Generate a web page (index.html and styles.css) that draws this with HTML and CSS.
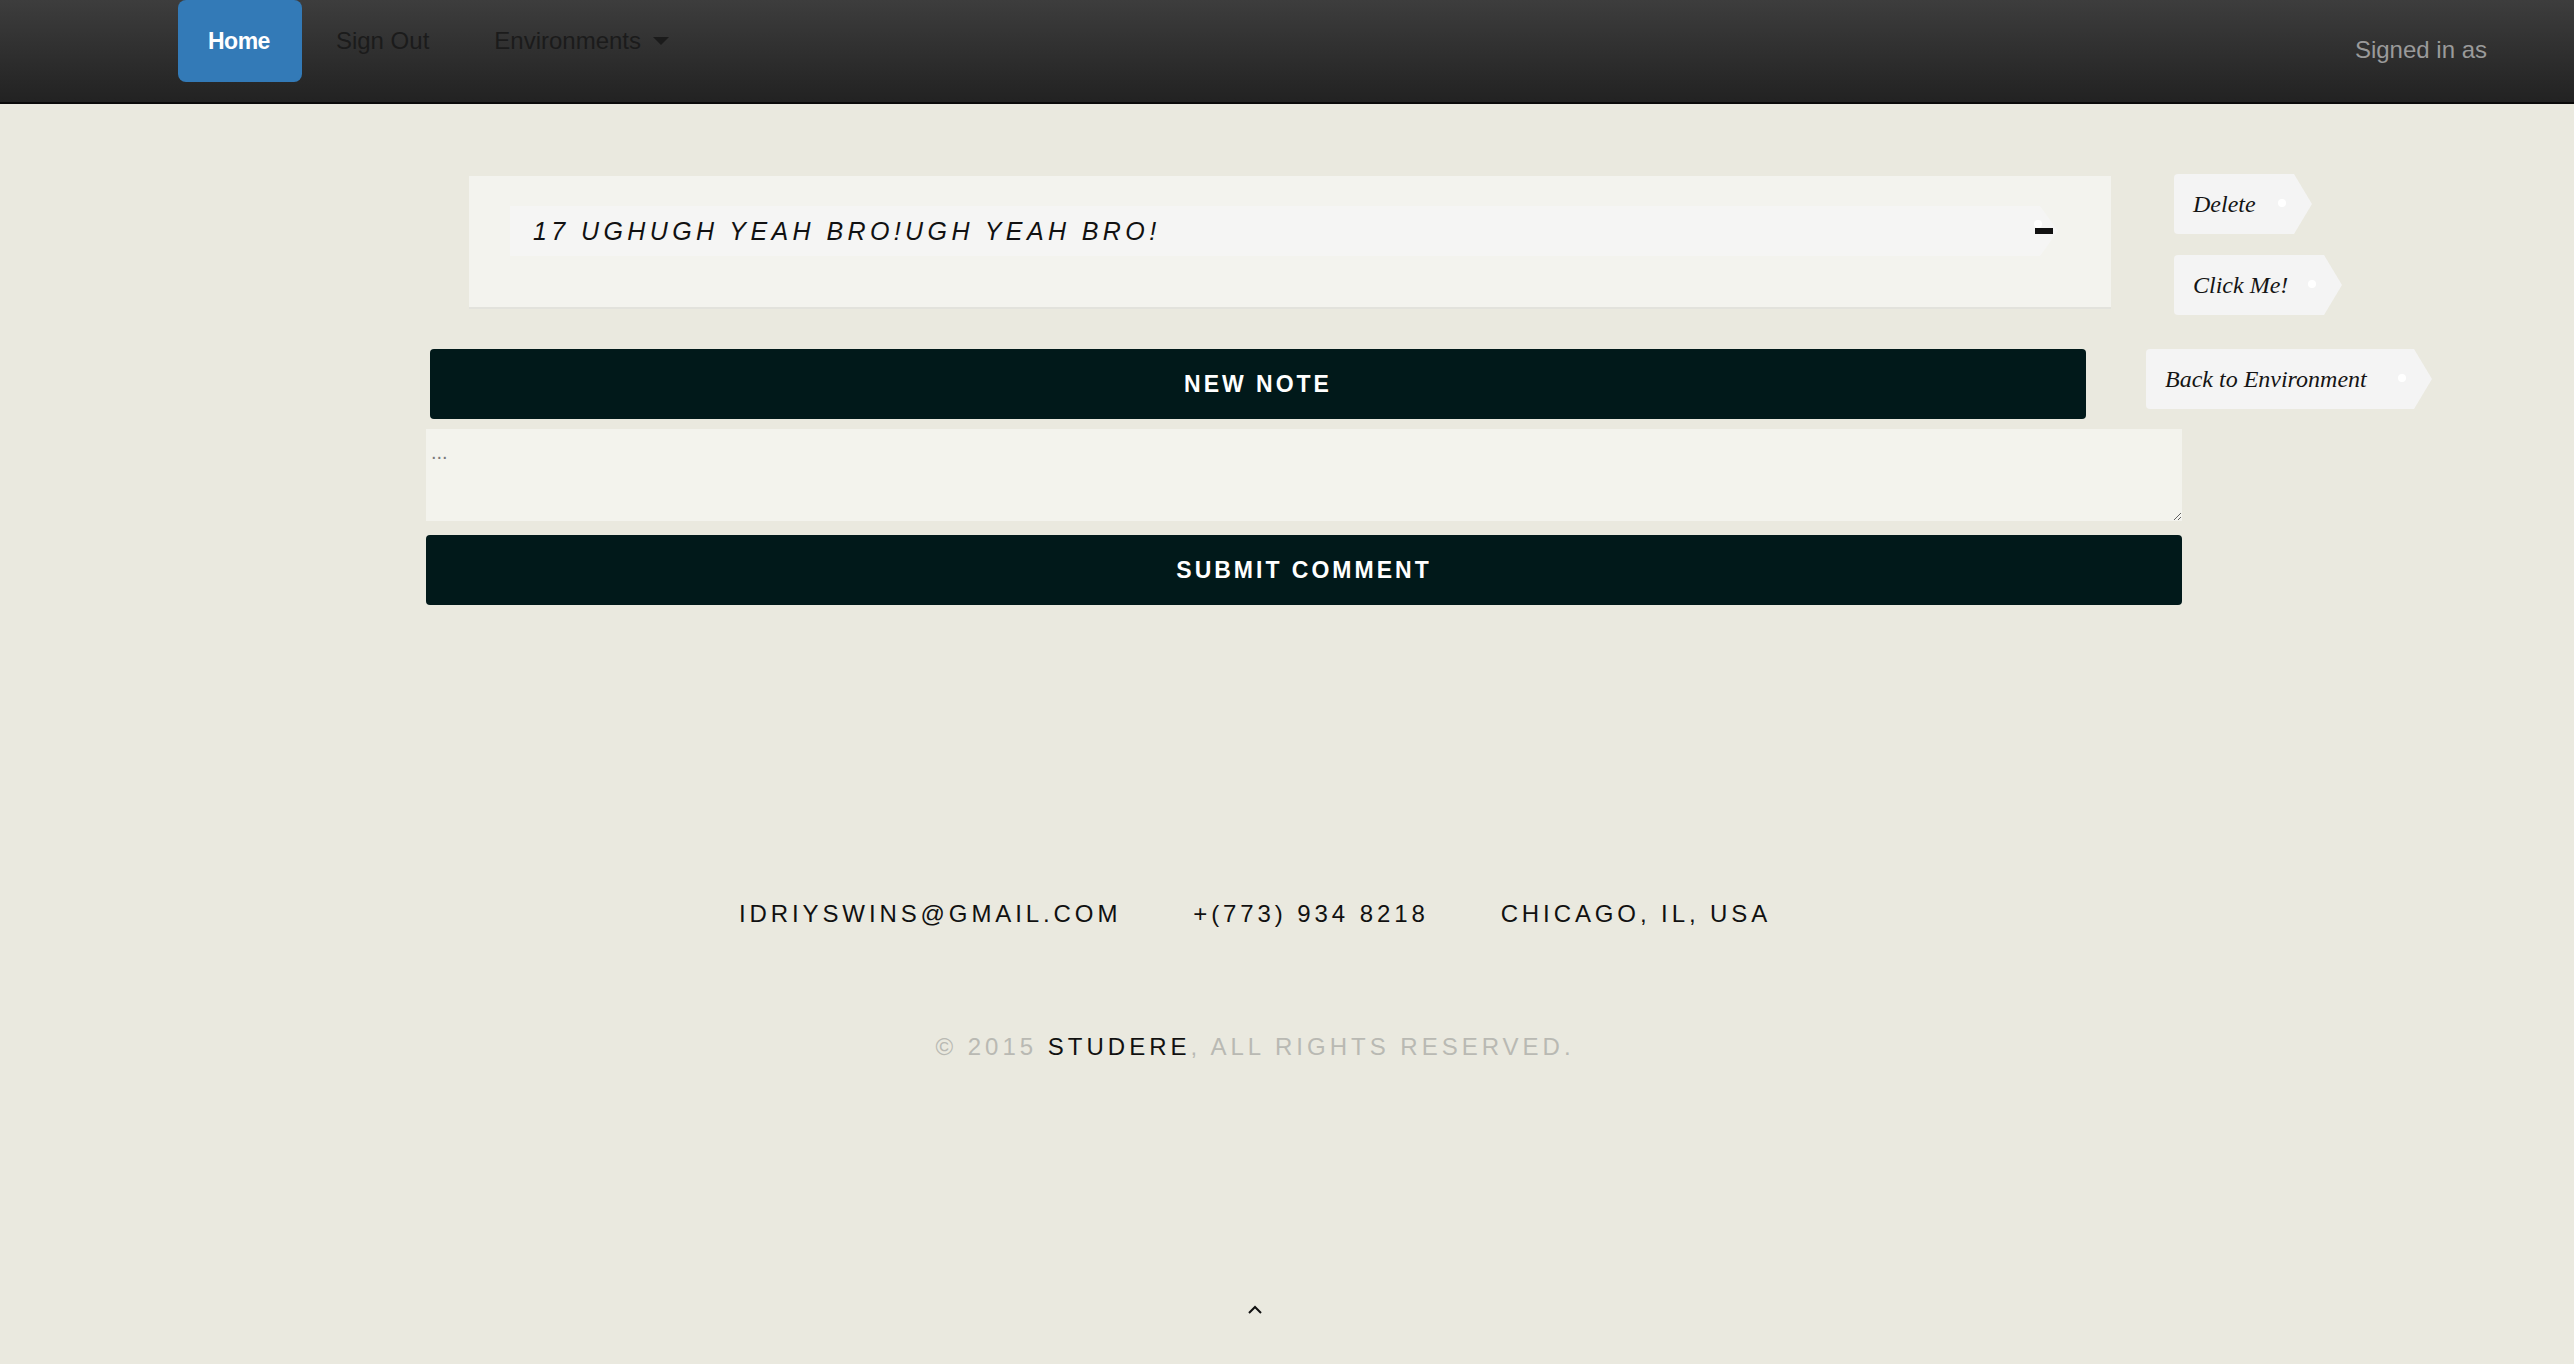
FILE: index.html
```html
<!DOCTYPE html>
<html lang="en">
<head>
<meta charset="utf-8">
<title>Studere - Note</title>
<link rel="stylesheet" href="styles.css">
</head>
<body>
<header class="navbar">
  <nav class="nav-left">
    <a class="nav-item nav-home" href="#">Home</a>
    <a class="nav-item" href="#">Sign Out</a>
    <a class="nav-item" href="#">Environments<span class="caret"></span></a>
  </nav>
  <div class="signed">Signed in as</div>
</header>

<main class="main">
  <div class="row-top">
    <section class="card">
      <div class="card-title">
        <span class="title-text">17 UGHUGH YEAH BRO!UGH YEAH BRO!</span>
        <span class="title-dot"></span>
        <span class="title-minus"></span>
      </div>
    </section>
    <div class="tags">
      <a class="tag tag-delete" href="#">Delete</a>
      <a class="tag tag-click" href="#">Click Me!</a>
    </div>
  </div>

  <div class="row-mid">
    <button class="btn-dark btn-note" type="button">New Note</button>
    <a class="tag tag-back" href="#">Back to Environment</a>
  </div>

  <form class="comment-form">
    <textarea class="comment-box" placeholder="..."></textarea>
    <button class="btn-dark btn-submit" type="button">Submit Comment</button>
  </form>
</main>

<footer class="footer">
  <ul class="contacts">
    <li>IDRIYSWINS@GMAIL.COM</li>
    <li>+(773) 934 8218</li>
    <li>CHICAGO, IL, USA</li>
  </ul>
  <p class="copyright">© 2015 <span class="brand">STUDERE</span>, ALL RIGHTS RESERVED.</p>
  <a class="to-top" href="#">
    <svg width="14" height="9" viewBox="0 0 14 9"><path d="M1 8 L7 2 L13 8" fill="none" stroke="#111" stroke-width="2"/></svg>
  </a>
</footer>
</body>
</html>
```

FILE: styles.css
```css
html, body {
  margin: 0;
  padding: 0;
}
body {
  background: #eae9df;
  font-family: "Liberation Sans", Arial, Helvetica, sans-serif;
  color: #111;
  min-height: 1364px;
}
a {
  text-decoration: none;
}

/* NAVBAR */
.navbar {
  height: 102px;
  border-bottom: 2px solid #0a0a0a;
  background: linear-gradient(to bottom, #3d3d3d 0%, #222222 100%);
  display: flex;
  justify-content: space-between;
  padding: 0 87px 0 178px;
}
.nav-left {
  display: flex;
  align-items: flex-start;
}
.nav-item {
  height: 82px;
  padding: 0 31px 0 34px;
  display: flex;
  align-items: center;
  font-size: 24px;
  color: #1b1b1b;
}
.nav-home {
  padding: 0 32px 0 30px;
  background: #337ab7;
  color: #fff;
  border-radius: 8px;
  font-weight: 600;
  font-size: 23px;
  letter-spacing: -0.5px;
}
.caret {
  display: inline-block;
  width: 0;
  height: 0;
  margin-left: 12px;
  border-top: 8px solid #1b1b1b;
  border-left: 8px solid transparent;
  border-right: 8px solid transparent;
}
.signed {
  align-self: center;
  margin-top: -2px;
  font-size: 24px;
  color: #9a9a9a;
}

/* MAIN */
.main {
  padding-top: 70px;
}
.row-top {
  display: flex;
  align-items: flex-start;
  margin-left: 469px;
  gap: 63px;
}
.card {
  box-sizing: border-box;
  width: 1642px;
  height: 131px;
  margin-top: 2px;
  padding: 30px 0 0 41px;
  background: #f3f3ee;
  box-shadow: 0 2px 0 #e2e2dc;
}
.card-title {
  position: relative;
  box-sizing: border-box;
  width: 1548px;
  height: 50px;
  padding-left: 23px;
  display: flex;
  align-items: center;
  background: #f5f5f4;
  clip-path: polygon(0 0, calc(100% - 18px) 0, 100% 50%, calc(100% - 18px) 100%, 0 100%);
}
.title-text {
  font-style: italic;
  font-size: 25px;
  letter-spacing: 4.4px;
  color: #111;
}
.title-dot {
  position: absolute;
  left: 1524px;
  top: 14px;
  width: 8px;
  height: 8px;
  border-radius: 50%;
  background: #fff;
}
.title-minus {
  position: absolute;
  left: 1525px;
  top: 22px;
  width: 18px;
  height: 6px;
  background: #111;
}

.tags {
  display: flex;
  flex-direction: column;
  align-items: flex-start;
  gap: 21px;
}
.tag {
  position: relative;
  box-sizing: border-box;
  height: 60px;
  padding: 0 0 0 19px;
  display: inline-flex;
  align-items: center;
  background: #f4f4f4;
  border-radius: 4px;
  clip-path: polygon(0 0, calc(100% - 18px) 0, 100% 50%, calc(100% - 18px) 100%, 0 100%);
  font-family: "Liberation Serif", Georgia, "Times New Roman", serif;
  font-style: italic;
  font-size: 24px;
  color: #141414;
  white-space: nowrap;
}
.tag-delete { width: 138px; }
.tag-click { width: 168px; }
.tag-back { width: 286px; }
.tag::after {
  content: "";
  position: absolute;
  right: 26px;
  top: 50%;
  width: 8px;
  height: 8px;
  margin-top: -5px;
  border-radius: 50%;
  background: #fff;
}

.row-mid {
  display: flex;
  align-items: flex-start;
  margin: 34px 0 0 430px;
  gap: 60px;
}
.btn-dark {
  display: flex;
  align-items: center;
  justify-content: center;
  height: 70px;
  border: 0;
  border-radius: 4px;
  background: #01191a;
  color: #fff;
  font-family: "Liberation Sans", Arial, sans-serif;
  font-weight: bold;
  font-size: 23px;
  letter-spacing: 3px;
  text-transform: uppercase;
  padding: 0;
}
.btn-note {
  width: 1656px;
}

.comment-form {
  margin: 10px 0 0 426px;
  width: 1756px;
}
.comment-box {
  display: block;
  box-sizing: border-box;
  width: 100%;
  height: 92px;
  margin: 0;
  padding: 12px 5px;
  border: 0;
  background: #f3f3ed;
  font-family: "Liberation Sans", Arial, sans-serif;
  font-size: 20px;
  color: #333;
  outline: none;
}
.comment-box::placeholder {
  color: #7a7a7a;
}
.btn-submit {
  width: 100%;
  margin-top: 14px;
}

/* FOOTER */
.footer {
  padding-right: 64px;
  text-align: center;
}
.contacts {
  list-style: none;
  margin: 295px 0 0;
  padding: 0;
  display: flex;
  justify-content: center;
  gap: 72px;
  font-size: 24px;
  line-height: 28px;
  letter-spacing: 3.9px;
  color: #111;
}
.copyright {
  margin: 105px 0 0;
  font-size: 24px;
  line-height: 28px;
  letter-spacing: 4px;
  color: #b9b9b3;
}
.brand {
  color: #111;
}
.to-top {
  display: inline-block;
  margin-top: 244px;
  line-height: 0;
}
```
